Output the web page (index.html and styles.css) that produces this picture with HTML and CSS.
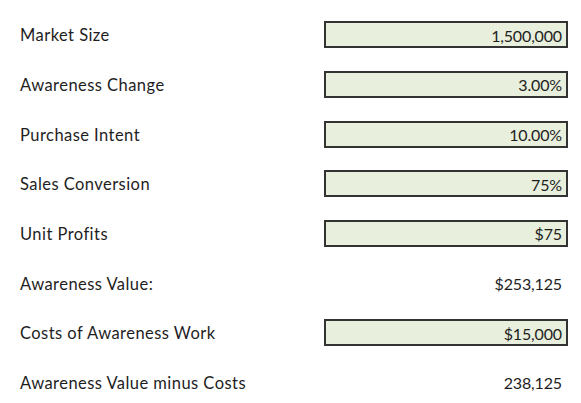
FILE: index.html
```html
<!DOCTYPE html>
<html lang="en">
<head>
<meta charset="utf-8">
<title>Awareness Value</title>
<link rel="stylesheet" href="styles.css">
</head>
<body>
<div class="sheet">
  <div class="row"><div class="label">Market Size</div><div class="cell input">1,500,000</div></div>
  <div class="row"><div class="label">Awareness Change</div><div class="cell input">3.00%</div></div>
  <div class="row"><div class="label">Purchase Intent</div><div class="cell input">10.00%</div></div>
  <div class="row"><div class="label">Sales Conversion</div><div class="cell input">75%</div></div>
  <div class="row"><div class="label">Unit Profits</div><div class="cell input">$75</div></div>
  <div class="row"><div class="label">Awareness Value:</div><div class="cell">$253,125</div></div>
  <div class="row"><div class="label">Costs of Awareness Work</div><div class="cell input">$15,000</div></div>
  <div class="row"><div class="label">Awareness Value minus Costs</div><div class="cell">238,125</div></div>
</div>
</body>
</html>
```
FILE: styles.css
```css
html, body {
  margin: 0;
  padding: 0;
  background: #ffffff;
}
.sheet {
  padding: 10px 0 0 20px;
  display: grid;
  grid-auto-rows: 49.67px;
  font-family: "Lato", "Open Sans", sans-serif;
  font-size: 16.5px;
  color: #1e1e1e;
}
.row {
  display: grid;
  grid-template-columns: 304px 244px;
  align-items: center;
}
.label {
  white-space: nowrap;
  letter-spacing: 0.45px;
  padding-top: 1px;
}
.cell {
  box-sizing: border-box;
  height: 27px;
  display: flex;
  align-items: center;
  justify-content: flex-end;
  padding-right: 4px;
  padding-top: 1px;
  font-size: 16px;
  letter-spacing: -0.15px;
}
.input {
  background: #e8efdd;
  border: 2px solid #333333;
}
.cell:not(.input) {
  padding-right: 6px;
}
```
